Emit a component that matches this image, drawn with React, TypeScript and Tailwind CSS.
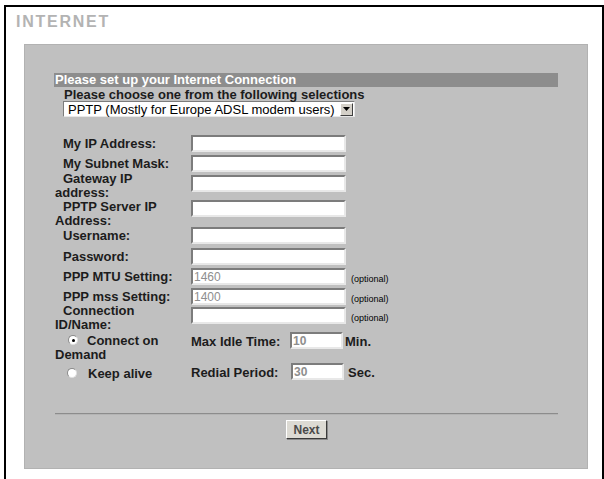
import React from "react";

type Row = {
  lines: string[];
  h: number;
  value?: string;
  optional?: boolean;
  up?: boolean;
};

const rows: Row[] = [
  { lines: ["My IP Address:"], h: 20 },
  { lines: ["My Subnet Mask:"], h: 20 },
  { lines: ["Gateway IP", "address:"], h: 25, up: true },
  { lines: ["PPTP Server IP", "Address:"], h: 27 },
  { lines: ["Username:"], h: 21 },
  { lines: ["Password:"], h: 20 },
  { lines: ["PPP MTU Setting:"], h: 20, value: "1460", optional: true },
  { lines: ["PPP mss Setting:"], h: 19, value: "1400", optional: true },
  { lines: ["Connection", "ID/Name:"], h: 25, optional: true, up: true },
];

const inset =
  "h-[17px] bg-white border-2 border-[#7c7c7c] border-b-[#e8e8e8] border-r-[#e8e8e8] px-[1px] text-[12px] leading-none text-[#8e8e8e] outline-none";

const Field = ({ value = "", w = "w-[155px]" }: { value?: string; w?: string }) => (
  <input readOnly defaultValue={value} className={`${inset} ${w}`} />
);

const Radio = ({ checked }: { checked?: boolean }) => (
  <span className="relative inline-block w-[10px] h-[10px] rounded-full bg-white border border-[#8a8a8a] border-b-[#e0e0e0] border-r-[#e0e0e0] align-[0px]">
    {checked && (
      <span className="absolute left-[2.5px] top-[2.5px] w-[3px] h-[3px] rounded-full bg-black" />
    )}
  </span>
);

export default function App() {
  return (
    <div className="w-[604px] h-[479px] overflow-hidden bg-white font-['Liberation_Sans',Arial,sans-serif] text-[#1c1c1c]">
      <div className="ml-[4px] mt-[5px] w-[600px] h-[500px] border-2 border-black">
        {/* title */}
        <div className="mt-[5px] mb-[12px] ml-[10px] text-[16px] leading-[20px] font-bold tracking-[1.75px] text-[#b3b3b3]">
          INTERNET
        </div>

        {/* gray panel */}
        <div className="ml-[18px] w-[564px] bg-[#c0c0c0] border border-[#b2b2b2] px-[29px] pt-[28px] pb-[29px]">
          <div className="h-[14px] bg-[#8d8d8d] pl-[1px] text-[13px] leading-[14px] font-bold text-white">
            Please set up your Internet Connection
          </div>

          <div className="mt-[1px] pl-[10px] text-[13px] leading-[13px] font-bold">
            Please choose one from the following selections
          </div>

          {/* select */}
          <div className="ml-[9px] flex items-center w-[292px] h-[16px] bg-white border border-[#7c7c7c] border-b-[#e8e8e8] border-r-[#e8e8e8]">
            <span className="flex-1 pl-[4px] text-[13px] leading-none text-black">
              PPTP (Mostly for Europe ADSL modem users)
            </span>
            <span className="flex items-center justify-center w-[13px] h-[13px] mr-[1px] bg-[#d4d0c8] border border-white border-b-[#404040] border-r-[#404040]">
              <svg width="7" height="4" viewBox="0 0 7 4">
                <path d="M0 0h7L3.5 4z" fill="#000" />
              </svg>
            </span>
          </div>

          {/* form rows */}
          <div className="mt-[18px] ml-[1px]">
            {rows.map((r) => (
              <div key={r.lines[0]} className="flex items-start" style={{ height: r.h }}>
                <div
                  className={`w-[136px] indent-2 text-[13px] font-bold ${
                    r.lines.length > 1
                      ? r.up
                        ? "leading-[14px] -mt-[3px]"
                        : "leading-[14px] mt-0"
                      : "leading-[11px] pt-[3px]"
                  }`}
                >
                  {r.lines[0]}
                  {r.lines[1] && (
                    <>
                      <br />
                      {r.lines[1]}
                    </>
                  )}
                </div>
                <Field value={r.value} />
                {r.optional && (
                  <span className="ml-[5px] mt-[6px] text-[9px] leading-[10px] text-black">(optional)</span>
                )}
              </div>
            ))}

            {/* connect on demand */}
            <div className="flex items-start h-[31px]">
              <div className="w-[136px] pt-[2px] text-[13px] leading-[14px] font-bold">
                <span className="pl-[13px]">
                  <Radio checked />
                  <span className="ml-[9px]">Connect on</span>
                </span>
                <br />
                Demand
              </div>
              <div className="flex items-center h-[17px] text-[13px] font-bold">
                <span className="w-[99px] mt-[2px]">Max Idle Time:</span>
                <Field value="10" w="w-[53px]" />
                <span className="ml-[2px] mt-[2px]">Min.</span>
              </div>
            </div>

            {/* keep alive */}
            <div className="flex items-start h-[17px]">
              <div className="w-[136px] pt-[4px] text-[13px] leading-[13px] font-bold">
                <span className="pl-[12px]">
                  <Radio />
                  <span className="ml-[11px]">Keep alive</span>
                </span>
              </div>
              <div className="flex items-center h-[17px] text-[13px] font-bold">
                <span className="w-[100px] mt-[2px]">Redial Period:</span>
                <Field value="30" w="w-[53px]" />
                <span className="ml-[4px] mt-[2px]">Sec.</span>
              </div>
            </div>
          </div>

          <div className="mt-[33px] ml-[1px] h-[2px] border-t border-t-[#8c8c8c] border-b border-b-[#b4b4b4]" />

          <div className="mt-[5px] flex justify-center pl-[1px]">
            <button className="w-[41px] h-[19px] bg-[#dcdad3] border border-white border-b-[#3a3a3a] border-r-[#3a3a3a] shadow-[1px_1px_0_#8a8a8a] text-[12px] leading-none font-bold text-[#4a4a4a]">
              Next
            </button>
          </div>
        </div>
      </div>
    </div>
  );
}
